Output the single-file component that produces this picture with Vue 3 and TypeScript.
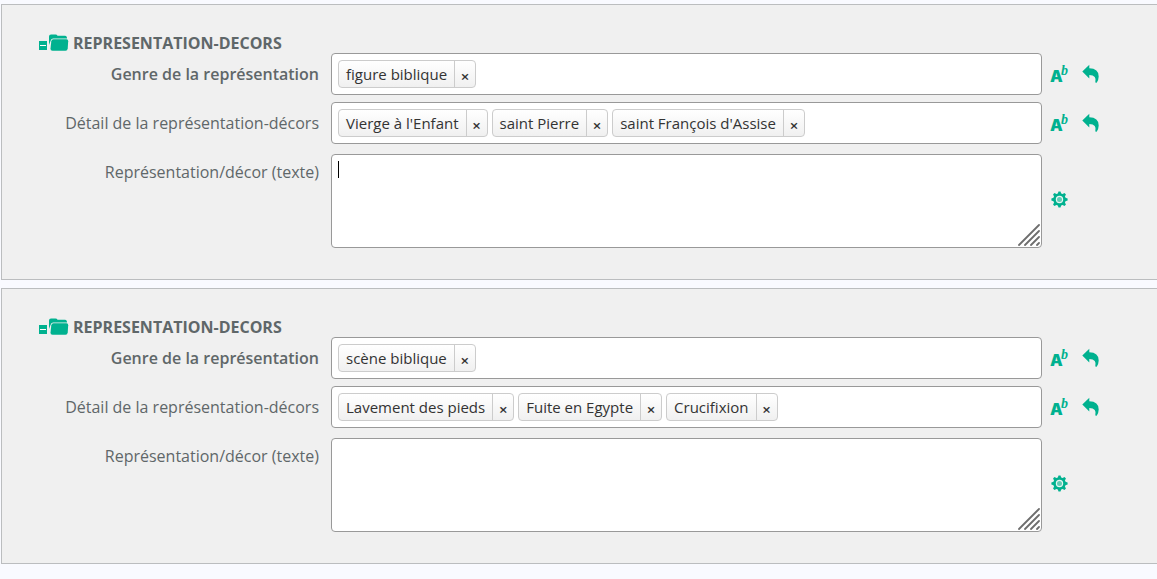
<script setup lang="ts">
import { ref } from 'vue'

interface TagField {
  label: string
  strong: boolean
  tags: string[]
}

interface Group {
  id: string
  title: string
  fields: TagField[]
  textLabel: string
  text: string
  active: boolean
}

const groups = ref<Group[]>([
  {
    id: 'decor-1',
    title: 'REPRESENTATION-DECORS',
    fields: [
      { label: 'Genre de la représentation', strong: true, tags: ['figure biblique'] },
      {
        label: 'Détail de la représentation-décors',
        strong: false,
        tags: ["Vierge à l'Enfant", 'saint Pierre', "saint François d'Assise"],
      },
    ],
    textLabel: 'Représentation/décor (texte)',
    text: '',
    active: true,
  },
  {
    id: 'decor-2',
    title: 'REPRESENTATION-DECORS',
    fields: [
      { label: 'Genre de la représentation', strong: true, tags: ['scène biblique'] },
      {
        label: 'Détail de la représentation-décors',
        strong: false,
        tags: ['Lavement des pieds', 'Fuite en Egypte', 'Crucifixion'],
      },
    ],
    textLabel: 'Représentation/décor (texte)',
    text: '',
    active: false,
  },
])

function removeTag(field: TagField, index: number): void {
  field.tags.splice(index, 1)
}
</script>

<template>
  <main class="page">
    <section v-for="group in groups" :key="group.id" class="panel">
      <h2 class="title">
        <button type="button" class="icon-button" aria-label="Replier le groupe">
          <svg width="30" height="18" viewBox="0 0 30 18">
            <rect x="0" y="7" width="8" height="9" fill="#00b18f" />
            <rect x="1" y="11" width="6" height="1" fill="#fff" />
            <path d="M10 11V2.500Q10 0.500 12 0.500H16.500Q18 0.500 18.500 1.700H26Q28 1.700 28 4.500H14Q12 4.500 11.500 7Z" fill="#00b18f" />
            <path d="M14.500 5.300H27.500Q29.300 5.300 29.200 7.300L28.700 14.500Q28.500 16.700 26.500 16.700H13.500Q11.300 16.700 11.500 14.500L12.300 7.300Q12.600 5.300 14.500 5.300Z" fill="#00b18f" />
          </svg>
        </button>
        <span>{{ group.title }}</span>
      </h2>

      <div v-for="(field, f) in group.fields" :key="field.label" class="row">
        <label class="label" :class="{ strong: field.strong }" :for="`${group.id}-${f}`">{{ field.label }}</label>
        <div class="box tag-box">
          <span v-for="(tag, t) in field.tags" :key="tag" class="tag">
            <span class="tag-text">{{ tag }}</span>
            <button type="button" class="remove" :aria-label="`Retirer ${tag}`" @click="removeTag(field, t)">×</button>
          </span>
          <input :id="`${group.id}-${f}`" class="tag-input" type="text" />
        </div>
        <div class="actions">
          <button type="button" class="icon-button" aria-label="Lexique">
            <svg class="lexicon" width="20" height="28" viewBox="0 -4 20 28">
              <text class="glyph-a" x="0" y="18">A</text>
              <text class="glyph-b" x="11" y="11">b</text>
            </svg>
          </button>
          <button type="button" class="icon-button" aria-label="Rétablir">
            <svg width="18" height="20" viewBox="0 0 18 20">
              <path d="M0.300 7.500L7.300 0.800V4.300Q16.700 4.500 16.700 12.500Q16.700 15.500 14.700 18.800L13.300 18.500Q15.200 11.300 7.300 11V14.500Z" fill="#00b18f" />
            </svg>
          </button>
        </div>
      </div>

      <div class="row text-row">
        <label class="label text-label" :for="`${group.id}-texte`">{{ group.textLabel }}</label>
        <div class="text-wrap">
          <textarea :id="`${group.id}-texte`" v-model="group.text" class="box text-area"></textarea>
          <span v-if="group.active" class="caret"></span>
          <svg class="grip" width="22" height="22" viewBox="0 0 22 22" stroke="#6e6e6e" stroke-width="1.800" stroke-linecap="round">
            <path d="M1 21L21 1M7 21L21 7M13 21L21 13M19 21L21 19" />
          </svg>
        </div>
        <div class="actions">
          <button type="button" class="icon-button" aria-label="Options">
            <svg width="20" height="20" viewBox="0 0 20 20">
              <g fill="#00b18f">
                <circle cx="9.500" cy="8.500" r="6.200" />
                <path v-for="a in 8" :key="a" d="M7.300 4L8.500 0.400H10.500L11.700 4Z" :transform="`rotate(${a * 45} 9.500 8.500)`" />
              </g>
              <circle cx="9.500" cy="8.500" r="3.100" fill="#62cbb6" stroke="#e6f6f2" stroke-width="1.200" />
            </svg>
          </button>
        </div>
      </div>
    </section>
  </main>
</template>

<style>
body {
  margin: 0;
  background: #f9faff;
}
</style>

<style scoped>
.page {
  display: flex;
  flex-direction: column;
  gap: 8px;
  padding: 4px 0 16px 1px;
  font-family: "Open Sans", "Noto Sans", sans-serif;
  font-size: 16px;
  color: #5f6769;
}
.panel {
  box-sizing: border-box;
  padding: 28px 0 31px 37px;
  border: 1px solid #bbbdbf;
  border-right: 0;
  background: #f0f0f0;
}
.title {
  display: flex;
  align-items: center;
  gap: 4px;
  height: 20px;
  margin: 0;
  font-size: 16px;
  line-height: 20px;
  font-weight: 700;
}
.icon-button {
  display: block;
  padding: 0;
  border: 0;
  background: none;
  cursor: pointer;
}
.icon-button svg {
  display: block;
}
.lexicon {
  fill: #00b18f;
  overflow: visible;
}
.glyph-a {
  font: 900 16px "Inter", "Liberation Sans", sans-serif;
}
.glyph-b {
  font: italic 700 14px "Liberation Serif", serif;
}
.row {
  display: flex;
  align-items: center;
  margin-bottom: 7px;
}
.text-row {
  margin: 10px 0 0;
}
.label {
  flex: 0 0 280px;
  margin-right: 12px;
  line-height: 22px;
  text-align: right;
  white-space: nowrap;
}
.strong {
  font-weight: 600;
}
.text-label {
  align-self: flex-start;
  padding-top: 7px;
}
.box {
  box-sizing: border-box;
  border: 1px solid #999;
  border-radius: 4px;
  background: #fff;
}
.tag-box {
  flex: 1;
  min-width: 0;
  display: flex;
  gap: 4px;
  padding: 6px;
}
.tag {
  display: flex;
  box-sizing: border-box;
  height: 28px;
  border: 1px solid #ccc;
  border-radius: 4px;
  background: linear-gradient(#fff, #f0f0f0);
  color: #333;
  font-size: 15px;
  line-height: 26px;
  white-space: nowrap;
}
.tag-text {
  padding: 0 7px;
}
.remove {
  width: 21px;
  padding: 3px 0 0;
  border: 0;
  border-left: 1px solid #ccc;
  background: none;
  color: #333;
  font: 600 15px/20px "Noto Sans", sans-serif;
  cursor: pointer;
}
.tag-input {
  flex: 1;
  min-width: 0;
  padding: 0;
  border: 0;
  outline: 0;
  background: none;
  font: inherit;
}
.actions {
  flex: 0 0 107px;
  display: flex;
  align-items: center;
  gap: 12px;
  padding-left: 8px;
}
.text-wrap {
  position: relative;
  flex: 1;
  min-width: 0;
  display: flex;
}
.text-area {
  width: 100%;
  height: 94px;
  padding: 6px;
  outline: 0;
  resize: none;
  font: inherit;
}
.caret {
  position: absolute;
  top: 7px;
  left: 7px;
  width: 1px;
  height: 17px;
  background: #000;
}
.grip {
  position: absolute;
  right: 2px;
  bottom: 2px;
}
</style>
